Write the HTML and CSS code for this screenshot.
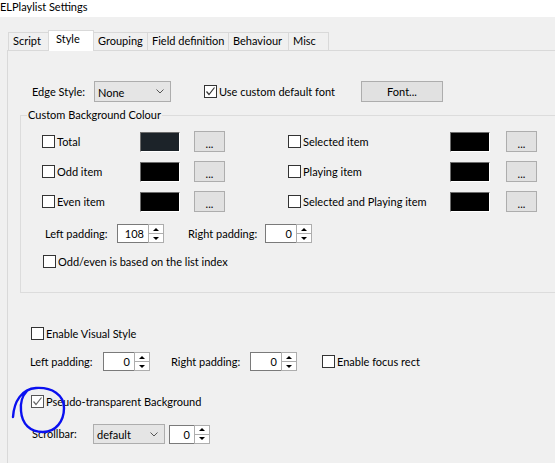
FILE: index.html
```html
<!DOCTYPE html>
<html lang="en">
<head>
<meta charset="utf-8">
<title>ELPlaylist Settings</title>
<link rel="stylesheet" href="styles.css">
</head>
<body>
<div class="titlebar"><span class="title">ELPlaylist Settings</span></div>

<div class="tabs">
  <div class="tab tab-script">Script</div>
  <div class="tab tab-style active">Style</div>
  <div class="tab tab-grouping">Grouping</div>
  <div class="tab tab-field">Field definition</div>
  <div class="tab tab-behaviour">Behaviour</div>
  <div class="tab tab-misc">Misc</div>
</div>

<div class="panel">
  <div class="row edge-row">
    <span class="lbl lbl-edge">Edge Style:</span>
    <div class="combo combo-edge"><span class="combo-text">None</span>
      <svg class="chev" width="8" height="5" viewBox="0 0 8 5"><path d="M0.5 0.5 L4 4 L7.5 0.5" fill="none" stroke="#555" stroke-width="1"/></svg>
    </div>
    <label class="check check-font"><span class="box checked"><svg width="11" height="11" viewBox="0 0 11 11"><path d="M1.5 5.5 L4 8.5 L9.5 1.5" fill="none" stroke="#333" stroke-width="1.2"/></svg></span><span class="ctext">Use custom default font</span></label>
    <button class="btn btn-font">Font...</button>
  </div>

  <div class="group">
    <div class="group-title">Custom Background Colour</div>
    <div class="cgrid">
      <label class="check"><span class="box"></span><span class="ctext">Total</span></label>
      <span class="swatch swatch-total"></span>
      <button class="btn btn-dots">...</button>
      <label class="check"><span class="box"></span><span class="ctext">Selected item</span></label>
      <span class="swatch"></span>
      <button class="btn btn-dots">...</button>

      <label class="check"><span class="box"></span><span class="ctext">Odd item</span></label>
      <span class="swatch"></span>
      <button class="btn btn-dots">...</button>
      <label class="check"><span class="box"></span><span class="ctext">Playing item</span></label>
      <span class="swatch"></span>
      <button class="btn btn-dots">...</button>

      <label class="check"><span class="box"></span><span class="ctext">Even item</span></label>
      <span class="swatch"></span>
      <button class="btn btn-dots">...</button>
      <label class="check"><span class="box"></span><span class="ctext">Selected and Playing item</span></label>
      <span class="swatch"></span>
      <button class="btn btn-dots">...</button>
    </div>

    <div class="row pad-row">
      <span class="lbl lbl-lpad">Left padding:</span>
      <div class="spin"><span class="spin-val">108</span><span class="spin-btns"><span class="spin-up"></span><span class="spin-down"></span></span></div>
      <span class="lbl lbl-rpad">Right padding:</span>
      <div class="spin"><span class="spin-val">0</span><span class="spin-btns"><span class="spin-up"></span><span class="spin-down"></span></span></div>
    </div>

    <div class="row oddeven-row">
      <label class="check"><span class="box"></span><span class="ctext">Odd/even is based on the list index</span></label>
    </div>
  </div>

  <div class="row visual-row">
    <label class="check"><span class="box"></span><span class="ctext">Enable Visual Style</span></label>
  </div>

  <div class="row pad2-row">
    <span class="lbl lbl-lpad2">Left padding:</span>
    <div class="spin"><span class="spin-val">0</span><span class="spin-btns"><span class="spin-up"></span><span class="spin-down"></span></span></div>
    <span class="lbl lbl-rpad2">Right padding:</span>
    <div class="spin"><span class="spin-val">0</span><span class="spin-btns"><span class="spin-up"></span><span class="spin-down"></span></span></div>
    <label class="check check-focus"><span class="box"></span><span class="ctext">Enable focus rect</span></label>
  </div>

  <div class="row pseudo-row">
    <label class="check"><span class="box checked soft"><svg width="11" height="11" viewBox="0 0 11 11"><path d="M1.5 5.5 L4 8.5 L9.5 1.5" fill="none" stroke="#666" stroke-width="1.2"/></svg></span><span class="ctext">Pseudo-transparent Background</span></label>
  </div>

  <div class="row scroll-row">
    <span class="lbl lbl-scroll">Scrollbar:</span>
    <div class="combo combo-scroll"><span class="combo-text">default</span>
      <svg class="chev" width="8" height="5" viewBox="0 0 8 5"><path d="M0.5 0.5 L4 4 L7.5 0.5" fill="none" stroke="#555" stroke-width="1"/></svg>
    </div>
    <div class="spin spin-scroll"><span class="spin-val">0</span><span class="spin-btns"><span class="spin-up"></span><span class="spin-down"></span></span></div>
  </div>
</div>

<!-- hand-drawn ring around the pseudo-transparent option -->
<svg class="ring" width="80" height="60" viewBox="0 0 80 60">
  <path d="M13 36 C14 20 22 8 36 7 C52 6 64 14 64 27 C64 40 56 51 43 51 C30 51 22 43 21 30 C20 20 23 14 27 10" fill="none" stroke="#0a10f0" stroke-width="2.4" stroke-linecap="round"/>
</svg>
</body>
</html>
```

FILE: styles.css
```css
* {
  box-sizing: border-box;
}

html,
body {
  margin: 0;
  padding: 0;
}

body {
  position: relative;
  width: 555px;
  height: 463px;
  overflow: hidden;
  background: #f0f0f0;
  color: #000;
  font-family: Lato, "Liberation Sans", sans-serif;
  font-size: 11px;
  line-height: 14px;
}

/* window caption */
.titlebar {
  height: 17px;
  background: #fff;
}

.title {
  display: block;
  padding-top: 0;
  line-height: 13px;
}

/* tab strip */
.tabs {
  display: flex;
  align-items: flex-end;
  height: 19px;
  margin-top: 14px;
  padding-left: 8px;
}

.tab {
  height: 18px;
  margin-left: -1px;
  padding: 1px 0 0 4px;
  border: 1px solid #d9d9d9;
  border-bottom: 0;
  background: #f0f0f0;
  white-space: nowrap;
}

.tab-script { margin-left: 0; width: 43px; }
.tab-grouping { width: 55px; }
.tab-field { width: 82px; }
.tab-behaviour { width: 61px; }
.tab-misc { width: 41px; }

.tab.active {
  position: relative;
  z-index: 1;
  height: 21px;
  margin-left: -3px;
  margin-bottom: -1px;
  width: 46px;
  padding-left: 7px;
  background: #fff;
}

/* tab page */
.panel {
  height: 413px;
  margin-left: 7px;
  padding-top: 30px;
  border-top: 1px solid #d9d9d9;
  border-left: 1px solid #d9d9d9;
}

.row {
  display: flex;
  align-items: center;
}

.lbl {
  white-space: nowrap;
}

/* checkbox */
.check {
  display: flex;
  align-items: center;
  white-space: nowrap;
}

.box {
  display: flex;
  align-items: center;
  justify-content: center;
  width: 13px;
  height: 13px;
  flex: none;
  border: 1px solid #333;
  background: #fff;
}

.box.soft {
  border-color: #555;
}

.ctext {
  margin-left: 2px;
}

/* buttons */
.btn {
  height: 21px;
  padding: 0;
  border: 1px solid #adadad;
  background: #e1e1e1;
  color: #000;
  font: inherit;
  line-height: 17px;
}

.btn-dots {
  width: 31px;
  padding-top: 3px;
}

/* drop-down */
.combo {
  display: flex;
  align-items: center;
  justify-content: space-between;
  height: 21px;
  padding: 0 6px 0 3px;
  border: 1px solid #adadad;
  background: #e5e5e5;
}

.combo-text {
  padding-top: 2px;
}

.chev {
  display: block;
}

/* spin edit */
.spin {
  display: flex;
  width: 47px;
  height: 19px;
  border: 1px solid #7a7a7a;
  background: #fff;
}

.spin-val {
  flex: 1;
  padding-right: 4px;
  text-align: right;
  line-height: 17px;
}

.spin-btns {
  display: flex;
  flex-direction: column;
  width: 16px;
  height: 19px;
  margin: -1px -1px -1px 0;
  border: 1px solid #adadad;
  background: #fff;
}

.spin-up,
.spin-down {
  display: flex;
  flex: 1;
  align-items: center;
  justify-content: center;
}

.spin-up {
  border-bottom: 1px solid #adadad;
}

.spin-up::before {
  content: "";
  border-left: 3px solid transparent;
  border-right: 3px solid transparent;
  border-bottom: 3px solid #000;
}

.spin-down::before {
  content: "";
  border-left: 3px solid transparent;
  border-right: 3px solid transparent;
  border-top: 3px solid #000;
}

/* first row */
.edge-row {
  height: 21px;
}

.lbl-edge {
  width: 62px;
  margin-left: 24px;
}

.combo-edge {
  width: 77px;
}

.check-font {
  width: 157px;
  margin-left: 33px;
}

.btn-font {
  width: 82px;
}

/* colour group */
.group {
  height: 178px;
  margin: 13px 0 0 12px;
  border-top: 1px solid #dcdcdc;
  border-left: 1px solid #dcdcdc;
  border-bottom: 1px solid #dcdcdc;
}

.group-title {
  display: block;
  width: max-content;
  margin: -9px 0 0 6px;
  padding: 0 1px;
  background: #f0f0f0;
  line-height: 15px;
}

.cgrid {
  display: grid;
  grid-template-columns: 98px 54px 94px 162px 56px 31px;
  grid-auto-rows: 21px;
  row-gap: 9px;
  align-items: center;
  justify-items: start;
  margin: 9px 0 0 21px;
}

.swatch {
  display: block;
  width: 40px;
  height: 20px;
  border: 1px solid;
  border-color: #6d6d6d #fff #fff #6d6d6d;
  background: #000;
}

.swatch-total {
  background: #1c2329;
}

.pad-row {
  height: 19px;
  margin: 12px 0 0 24px;
}

.lbl-lpad {
  width: 72px;
}

.lbl-rpad {
  width: 77px;
  margin-left: 24px;
}

.oddeven-row {
  height: 13px;
  margin: 12px 0 0 22px;
}

/* lower options */
.visual-row {
  height: 13px;
  margin: 34px 0 0 23px;
}

.pad2-row {
  height: 19px;
  margin: 12px 0 0 22px;
}

.lbl-lpad2 {
  width: 73px;
}

.lbl-rpad2 {
  width: 79px;
  margin-left: 21px;
}

.check-focus {
  margin-left: 25px;
}

.pseudo-row {
  height: 13px;
  margin: 24px 0 0 23px;
}

.scroll-row {
  height: 20px;
  margin: 16px 0 0 24px;
}

.lbl-scroll {
  width: 61px;
}

.combo-scroll {
  width: 72px;
  height: 20px;
}

.spin-scroll {
  width: 41px;
  margin-left: 4px;
}

/* annotation ring */
.ring {
  position: absolute;
  left: 0;
  top: 381px;
  pointer-events: none;
}
```
